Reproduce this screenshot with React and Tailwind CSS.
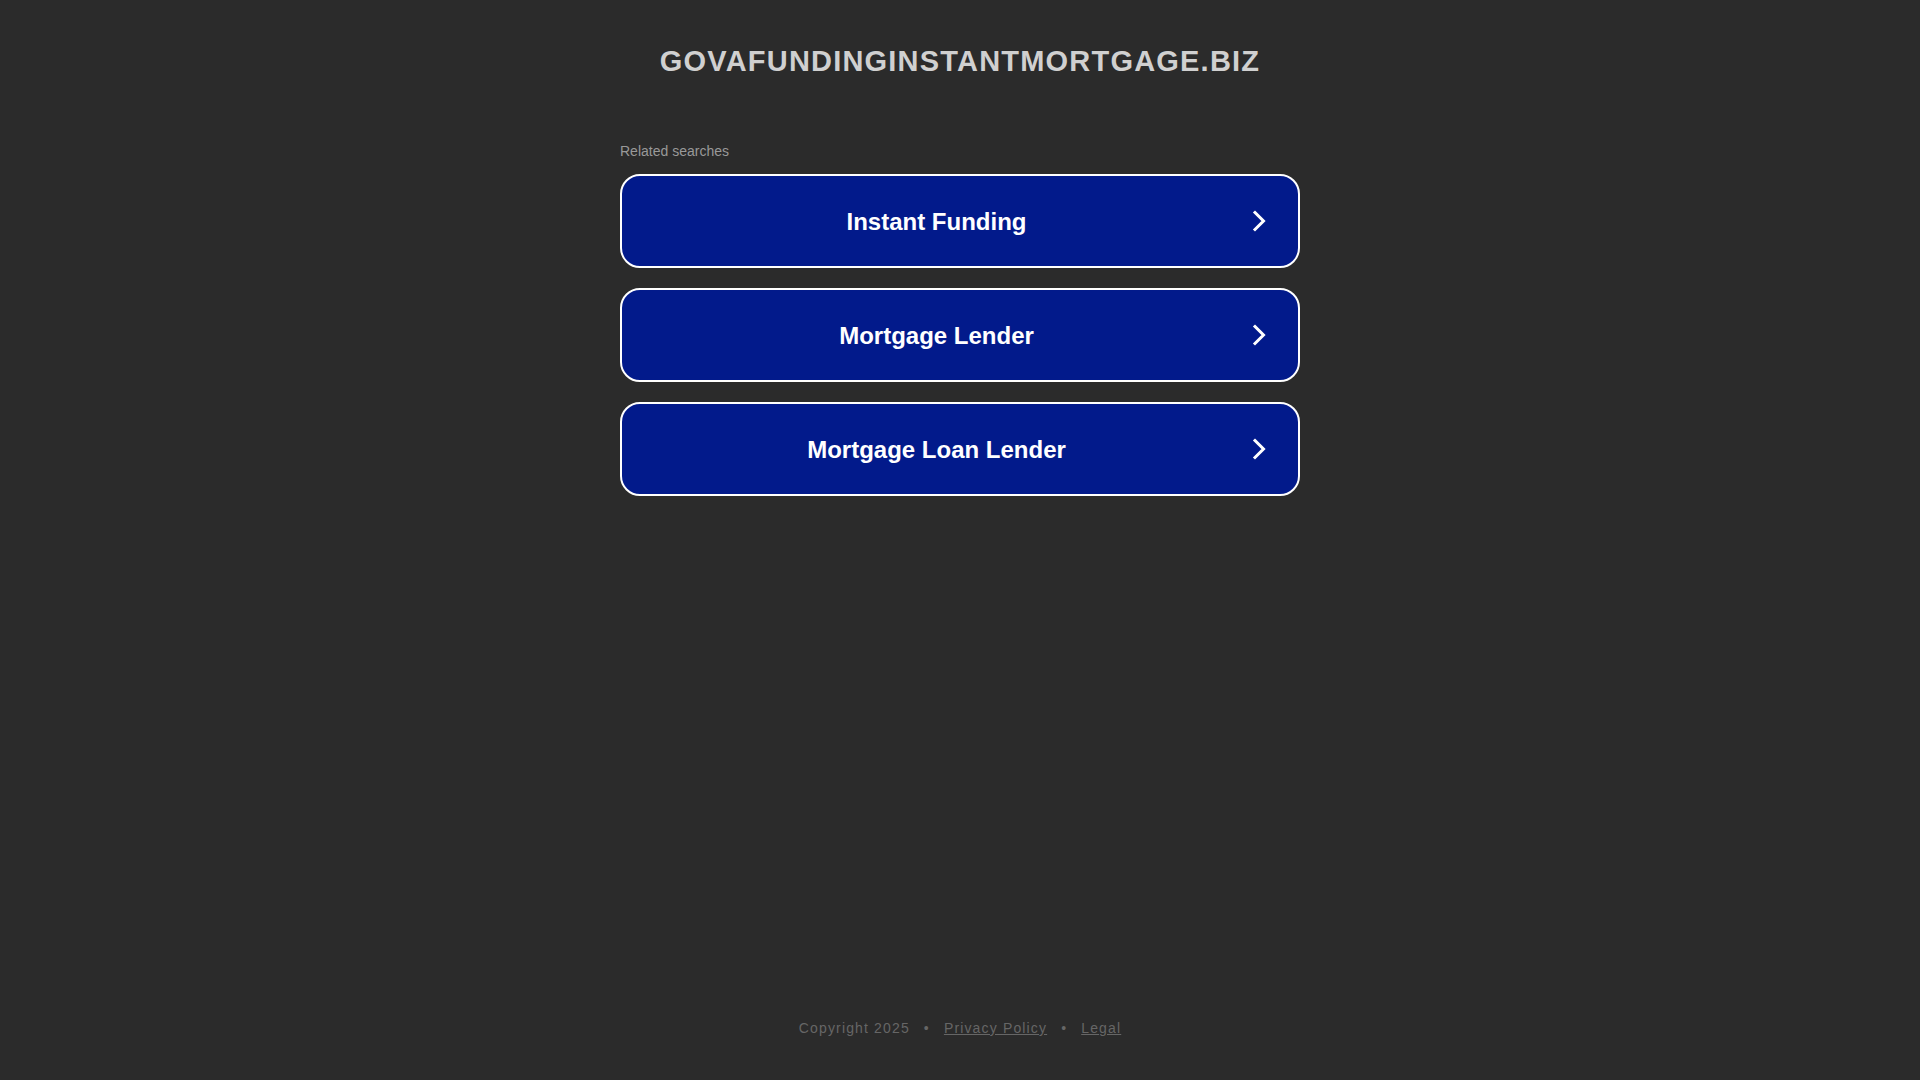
import React from "react";

function Chevron() {
  return (
    <svg width="16" height="24" viewBox="0 0 16 24" fill="none">
      <path d="M4 3.5 L12.5 12 L4 20.5" stroke="#ffffff" strokeWidth="3" strokeLinecap="square" strokeLinejoin="miter" />
    </svg>
  );
}

function Item({ label }) {
  return (
    <a
      href="#"
      className="flex items-center w-[680px] h-[94px] rounded-[20px] border-2 border-white bg-[#021a8b] pr-[31px] no-underline"
    >
      <span className="flex-1 text-center text-white font-bold text-[24px] leading-[30px] pt-[1px]">{label}</span>
      <Chevron />
    </a>
  );
}

export default function App() {
  return (
    <div
      className="min-h-screen w-full bg-[#2b2b2b] flex flex-col items-center"
      style={{ fontFamily: '"Liberation Sans", Arial, sans-serif' }}
    >
      <h1 className="pt-[43px] text-[29px] leading-[36px] font-bold tracking-[1.2px] text-[#d0d0d0] m-0">
        GOVAFUNDINGINSTANTMORTGAGE.BIZ
      </h1>
      <div className="w-[680px] mt-[62px]">
        <div className="text-[14px] leading-[20px] text-[#999999]">Related searches</div>
        <div className="mt-[13px] flex flex-col gap-[20px]">
          <Item label="Instant Funding" />
          <Item label="Mortgage Lender" />
          <Item label="Mortgage Loan Lender" />
        </div>
      </div>
      <div className="flex-1" />
      <div className="pb-[42px] text-[14px] leading-[20px] tracking-[1.15px] text-[#666666] flex items-center">
        <span>Copyright 2025</span>
        <span className="mx-[14px]">•</span>
        <a href="#" className="underline text-[#666666]">Privacy Policy</a>
        <span className="mx-[14px]">•</span>
        <a href="#" className="underline text-[#666666]">Legal</a>
      </div>
    </div>
  );
}
